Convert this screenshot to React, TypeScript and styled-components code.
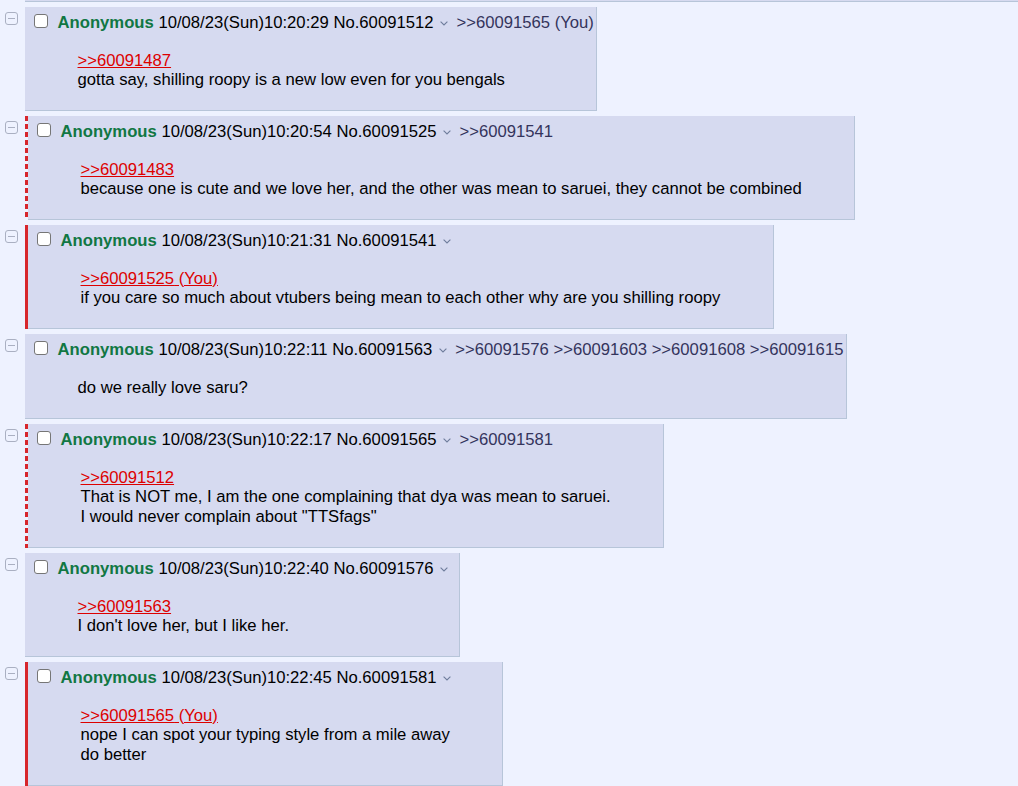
import React, { FC } from "react";
import styled, { createGlobalStyle } from "styled-components";

type Post = {
    date: string;
    no: string;
    backlinks: string[];
    quote?: string;
    quoteYou?: boolean;
    lines: string[];
    mark?: "solid" | "dashed";
};

const posts: Post[] = [
    {
        date: "10/08/23(Sun)10:20:29",
        no: "60091512",
        backlinks: [">>60091565 (You)"],
        quote: ">>60091487",
        lines: ["gotta say, shilling roopy is a new low even for you bengals"],
    },
    {
        date: "10/08/23(Sun)10:20:54",
        no: "60091525",
        backlinks: [">>60091541"],
        quote: ">>60091483",
        lines: [
            "because one is cute and we love her, and the other was mean to saruei, they cannot be combined",
        ],
        mark: "dashed",
    },
    {
        date: "10/08/23(Sun)10:21:31",
        no: "60091541",
        backlinks: [],
        quote: ">>60091525",
        quoteYou: true,
        lines: ["if you care so much about vtubers being mean to each other why are you shilling roopy"],
        mark: "solid",
    },
    {
        date: "10/08/23(Sun)10:22:11",
        no: "60091563",
        backlinks: [">>60091576", ">>60091603", ">>60091608", ">>60091615"],
        lines: ["do we really love saru?"],
    },
    {
        date: "10/08/23(Sun)10:22:17",
        no: "60091565",
        backlinks: [">>60091581"],
        quote: ">>60091512",
        lines: [
            "That is NOT me, I am the one complaining that dya was mean to saruei.",
            'I would never complain about "TTSfags"',
        ],
        mark: "dashed",
    },
    {
        date: "10/08/23(Sun)10:22:40",
        no: "60091576",
        backlinks: [],
        quote: ">>60091563",
        lines: ["I don't love her, but I like her."],
    },
    {
        date: "10/08/23(Sun)10:22:45",
        no: "60091581",
        backlinks: [],
        quote: ">>60091565",
        quoteYou: true,
        lines: ["nope I can spot your typing style from a mile away", "do better"],
        mark: "solid",
    },
];

const HideIcon: FC = () => (
    <svg width="13" height="13" viewBox="0 0 13 13">
        <rect x="0.5" y="0.5" width="12" height="12" rx="2.5" fill="none" stroke="#aab0c2" />
        <line x1="3" y1="6.5" x2="10" y2="6.5" stroke="#aab0c2" />
    </svg>
);

const MenuCaret: FC = () => (
    <Caret width="8" height="5" viewBox="0 0 8 5">
        <path d="M0.6 0.6 L4 4 L7.4 0.6" fill="none" stroke="#6f7d9c" strokeWidth="1.1" />
    </Caret>
);

const PostRow: FC<{ post: Post }> = ({ post }) => (
    <Row>
        <Side>
            <HideIcon />
        </Side>
        <Mark $kind={post.mark}>
            <Reply>
                <PostInfo>
                    <Check type="checkbox" />
                    <InfoText>
                        <Name>Anonymous</Name> {post.date} No.{post.no}
                        <MenuCaret />
                        {post.backlinks.map((b, k) => (
                            <React.Fragment key={k}>
                                {k > 0 ? " " : null}
                                <Backlink>{b}</Backlink>
                            </React.Fragment>
                        ))}
                    </InfoText>
                </PostInfo>
                <Message>
                    {post.quote ? (
                        <Quote>
                            {post.quote}
                            {post.quoteYou ? " (You)" : null}
                        </Quote>
                    ) : null}
                    {post.lines.map((l, k) => (
                        <Line key={k}>{l}</Line>
                    ))}
                </Message>
            </Reply>
        </Mark>
    </Row>
);

export default function App() {
    return (
        <>
            <GlobalStyle />
            <Thread>
                <TailRow>
                    <PrevTail />
                </TailRow>
                {posts.map((p) => (
                    <PostRow key={p.no} post={p} />
                ))}
            </Thread>
        </>
    );
}

const GlobalStyle = createGlobalStyle`
    html, body {
        margin: 0;
        background: #eef2ff;
        overflow: hidden;
    }
    body {
        font-family: "Liberation Sans", Arial, sans-serif;
        font-size: 16.67px;
        color: #000;
    }
`;

const Thread = styled.div`
    display: flex;
    flex-direction: column;
    gap: 5px;
    height: 786px;
`;

const TailRow = styled.div`
    padding-left: 25px;
`;

const PrevTail = styled.div`
    height: 1px;
    background: #d6daf0;
    border-bottom: 1px solid #b7c5d9;
`;

const Row = styled.div`
    display: flex;
    align-items: flex-start;
`;

const Side = styled.div`
    flex: 0 0 25px;
    padding: 5px 0 0 5px;
    box-sizing: border-box;
    line-height: 0;
`;

const Mark = styled.div<{ $kind?: "solid" | "dashed" }>`
    display: flex;
    padding-left: ${({ $kind }) => ($kind ? "3px" : "0")};
    background: ${({ $kind }) =>
        $kind === "solid"
            ? "#d7262c"
            : $kind === "dashed"
            ? "repeating-linear-gradient(to bottom, #d7262c 0 5px, transparent 5px 8px)"
            : "none"};
`;

const Reply = styled.div`
    background: #d6daf0;
    border-right: 1px solid #b7c5d9;
    border-bottom: 1px solid #b7c5d9;
    padding: 2.5px 2.5px;
`;

const PostInfo = styled.div`
    display: flex;
    align-items: flex-start;
    height: 24px;
    white-space: nowrap;
`;

const Check = styled.input`
    appearance: none;
    margin: 4px 10px 0 6px;
    width: 14px;
    height: 14px;
    box-sizing: border-box;
    border: 1px solid #767676;
    border-radius: 3px;
    background: #fff;
`;

const InfoText = styled.div`
    padding-top: 3px;
    line-height: 20px;
`;

const Name = styled.span`
    color: #117743;
    font-weight: bold;
`;

const Caret = styled.svg`
    display: inline-block;
    margin: 0 8px 2px 7px;
`;

const Backlink = styled.span`
    color: #34345c;
`;

const Message = styled.div`
    margin: 17px 50px 18px 50px;
    line-height: 20px;
    white-space: nowrap;
`;

const Quote = styled.div`
    color: #dd0000;
    text-decoration: underline;
    line-height: 19px;
`;

const Line = styled.div``;
